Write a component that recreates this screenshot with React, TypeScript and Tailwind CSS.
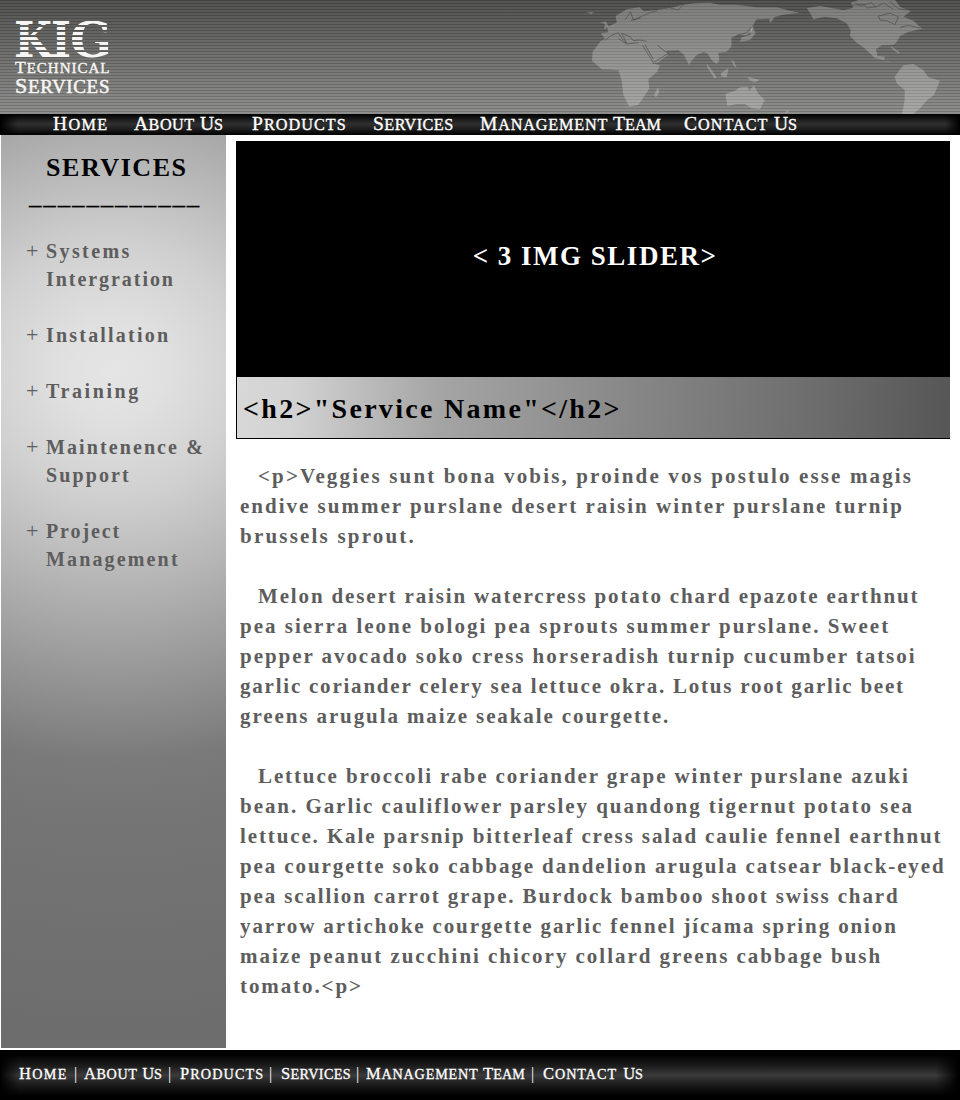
import React from "react";

type Word = [text: string, tracking: string];

const NAV: { words: Word[]; box: string }[] = [
  { words: [["Home", "tracking-[1.4px]"]], box: "ml-[53px] w-[56px]" },
  { words: [["About", "tracking-[.5px]"], ["Us", "tracking-[0px]"]], box: "ml-[25px] w-[89px]" },
  { words: [["Products", "tracking-[1.05px]"]], box: "ml-[29px] w-[95px]" },
  { words: [["Services", "tracking-[.45px]"]], box: "ml-[26px] w-[80px]" },
  { words: [["Management", "tracking-[.85px]"], ["Team", "tracking-[0px]"]], box: "ml-[27px] w-[181px]" },
  { words: [["Contact", "tracking-[1px]"], ["Us", "tracking-[0px]"]], box: "ml-[23px] w-[113px]" },
];

const FOOT: { words: Word[]; box: string }[] = [
  { words: [["Home", "tracking-[1.3px]"]], box: "w-[49px]" },
  { words: [["About", "tracking-[.6px]"], ["Us", "tracking-[0px]"]], box: "ml-[16px] w-[78px]" },
  { words: [["Products", "tracking-[1.1px]"]], box: "ml-[18px] w-[83px]" },
  { words: [["Services", "tracking-[.35px]"]], box: "ml-[18px] w-[69px]" },
  { words: [["Management", "tracking-[.8px]"], ["Team", "tracking-[.1px]"]], box: "ml-[16px] w-[159px]" },
  { words: [["Contact", "tracking-[.95px]"], ["Us", "tracking-[0px]"]], box: "ml-[18px] w-[100px]" },
];

const PARAGRAPHS: Word[][] = [
  [
    ["<p>Veggies sunt bona vobis, proinde vos postulo esse magis", "tracking-[2.14px]"],
    ["endive summer purslane desert raisin winter purslane turnip", "tracking-[2px]"],
    ["brussels sprout.", "tracking-[2.2px]"],
  ],
  [
    ["Melon desert raisin watercress potato chard epazote earthnut", "tracking-[1.85px]"],
    ["pea sierra leone bologi pea sprouts summer purslane. Sweet", "tracking-[2px]"],
    ["pepper avocado soko cress horseradish turnip cucumber tatsoi", "tracking-[1.95px]"],
    ["garlic coriander celery sea lettuce okra. Lotus root garlic beet", "tracking-[1.78px]"],
    ["greens arugula maize seakale courgette.", "tracking-[1.9px]"],
  ],
  [
    ["Lettuce broccoli rabe coriander grape winter purslane azuki", "tracking-[1.88px]"],
    ["bean. Garlic cauliflower parsley quandong tigernut potato sea", "tracking-[1.95px]"],
    ["lettuce. Kale parsnip bitterleaf cress salad caulie fennel earthnut", "tracking-[1.88px]"],
    ["pea courgette soko cabbage dandelion arugula catsear black-eyed", "tracking-[1.9px]"],
    ["pea scallion carrot grape. Burdock bamboo shoot swiss chard", "tracking-[1.86px]"],
    ["yarrow artichoke courgette garlic fennel jícama spring onion", "tracking-[1.88px]"],
    ["maize peanut zucchini chicory collard greens cabbage bush", "tracking-[1.97px]"],
    ["tomato.<p>", "tracking-[1.9px]"],
  ],
];

const SERVICES: Word[][] = [
  [["Systems", "tracking-[2.4px]"], ["Intergration", "tracking-[1.95px]"]],
  [["Installation", "tracking-[2.2px]"]],
  [["Training", "tracking-[2.6px]"]],
  [["Maintenence &", "tracking-[2.1px]"], ["Support", "tracking-[2.1px]"]],
  [["Project", "tracking-[1.9px]"], ["Management", "tracking-[2.15px]"]],
];

const LOGO_BARS = [
  [0, 4],
  [6, 3],
  [11, 3],
  [16, 3],
  [21, 3],
  [26, 3],
  [31, 6],
];

function Caps({ words, size }: { words: Word[]; size: string }) {
  return (
    <>
      {words.map(([text, tracking]) => (
        <span key={text} className={`inline-block uppercase ${size} ${tracking}`}>
          {text}
        </span>
      ))}
    </>
  );
}

function Logo() {
  return (
    <div className="ml-[14px] mt-[21px] w-[100px] text-[#f6f6f4]">
      <svg className="block h-[37px] w-[100px] overflow-visible font-['DejaVu_Serif',serif]" viewBox="0 0 100 37">
        <defs>
          <pattern id="bars" width="110" height="40" patternUnits="userSpaceOnUse">
            {LOGO_BARS.map(([y, h]) => (
              <rect key={y} y={y} width="110" height={h} fill="#f6f6f4" />
            ))}
          </pattern>
        </defs>
        <g fontSize="49" fontWeight="bold" fill="url(#bars)">
          <text x="0" y="36" textLength="38" lengthAdjust="spacingAndGlyphs">K</text>
          <text x="37" y="36" textLength="20" lengthAdjust="spacingAndGlyphs">I</text>
          <text x="56" y="36" textLength="42" lengthAdjust="spacingAndGlyphs">G</text>
        </g>
      </svg>
      <div className="flex h-[18px] items-center pl-px uppercase [-webkit-text-stroke:.4px_#f6f6f4]">
        <span className="inline-block whitespace-nowrap text-[15px] leading-[18px] tracking-[1px] first-letter:text-[17.5px] first-letter:leading-[18px]">Technical</span>
      </div>
      <div className="flex h-[19px] items-center pl-px uppercase [-webkit-text-stroke:.5px_#f6f6f4]">
        <span className="inline-block whitespace-nowrap text-[19px] leading-[19px] tracking-[.65px] first-letter:text-[22px] first-letter:leading-[19px]">Services</span>
      </div>
    </div>
  );
}

function WorldMap() {
  return (
    <svg className="h-[114px] w-[390px]" viewBox="0 0 1170 342" preserveAspectRatio="none">
      <g fill="#ffffff" fillOpacity=".24">
        <path d="M92 100 L114 97 112 80 140 68 137 48 170 28 208 22 222 34 260 30 300 24 340 14 372 10 420 8 450 14 500 14 560 22 620 22 660 32 690 38 640 44 615 50 600 70 598 56 560 58 552 70 545 95 530 105 505 105 485 112 484 140 470 155 445 158 448 180 440 192 425 180 412 160 400 156 380 165 362 185 358 196 342 165 325 150 290 152 294 165 262 188 245 190 270 196 262 215 235 238 238 265 218 296 205 314 178 320 160 285 155 240 145 210 95 208 66 182 68 155 90 125 105 116Z" />
        <path d="M545 75 557 100 540 120 510 125 515 112 540 105Z" />
        <path d="M90 68 108 64 116 80 102 88 105 72Z M48 37 72 36 64 42Z M410 190 440 232 434 236 412 202Z M452 220 475 205 470 232 455 230Z M532 230 570 240 555 247 540 242Z M484 180 492 184 500 204 492 198Z M264 262 268 275 258 292 252 286Z M650 330 658 334 646 342Z" />
        <path d="M466 282 495 272 510 262 534 260 536 274 552 256 564 280 584 300 570 328 545 325 525 312 500 312 472 318Z" />
        <path d="M710 24 750 18 820 30 850 24 842 8 865 0 975 0 990 20 1022 34 1000 50 1030 62 1056 86 1015 96 990 108 978 130 970 134 935 136 918 148 922 168 945 170 942 180 962 188 955 184 915 174 880 142 860 128 840 108 842 90 830 70 800 55 765 50 730 58 722 42Z" />
        <path d="M1000 196 1030 192 1060 210 1075 232 1110 242 1092 285 1072 300 1050 325 1030 342 996 342 1004 300 1004 270 980 250 974 230 985 215Z M960 136 990 158 984 160 968 148Z" />
      </g>
      <g fill="none" stroke="#494949" strokeWidth="2.5" opacity=".75">
        <path d="M104 122 125 106 145 98 153 112 170 130 155 100 180 110 190 122 208 120 230 124 M145 115 170 132 205 128 M218 136 250 188 295 160 280 150 262 136 M225 134 250 178 M165 60 182 35 190 60 240 38 262 32 M182 62 212 54 M500 106 530 98 550 75 M300 24 325 30 340 14" />
        <path d="M845 16 880 12 890 24 920 20 940 10 M855 8 870 18 905 8 918 22 M925 48 960 40 985 50 975 74 950 62 930 60Z M990 82 1015 76 1050 84 M940 8 970 28 M960 6 985 26 1010 30" />
      </g>
    </svg>
  );
}

export default function App() {
  return (
    <div className="flex h-[1100px] w-[960px] flex-col overflow-hidden bg-white font-['Liberation_Serif',serif]">
      <header className="flex h-[114px] shrink-0 justify-between bg-[repeating-linear-gradient(180deg,rgba(0,0,0,.14)_0px,rgba(0,0,0,.14)_1px,rgba(255,255,255,.04)_1px,rgba(255,255,255,.04)_3px),linear-gradient(180deg,#4c4c4a,#6c6c6a_50%,#8a8a88)]">
        <Logo />
        <WorldMap />
      </header>

      <nav className="flex h-[21px] shrink-0 items-center bg-[linear-gradient(90deg,#000,transparent_18px,transparent_945px,#000),linear-gradient(180deg,#000,#1a1a1a_25%,#303030_48%,#1a1a1a_75%,#000)] text-white [-webkit-text-stroke:.35px_#fff]">
        {NAV.map(({ words, box }) => (
          <a key={box} className={`flex justify-between whitespace-nowrap leading-[21px] ${box}`}>
            <Caps words={words} size="text-[16.2px] first-letter:text-[19.5px]" />
          </a>
        ))}
      </nav>

      <main className="flex h-[915px] shrink-0">
        <aside className="ml-px h-[913px] w-[225px] shrink-0 bg-[radial-gradient(ellipse_450px_420px_at_50%_235px,#e5e5e5,#e0e0e0_12%,#d0d0d0_30%,#b6b6b6_50%,#a0a0a0_66%,#7a7a7a_93%,#747474_110%,#6c6c6c_165%)] pl-[25px] pt-[18px]">
          <h2 className="ml-[20px] text-[26px] font-bold leading-[30px] tracking-[1.55px]">SERVICES</h2>
          <div className="ml-[3px] -mt-[2px] mb-[9px] h-[47px] text-[25px] leading-[30px] tracking-[1.85px] [-webkit-text-stroke:.2px_#000]">____________</div>
          {SERVICES.map((lines) => (
            <div key={lines[0][0]} className="mb-[28px] flex text-[20px] leading-[28px] text-[#5d5d5d]">
              <span className="w-[20px] text-[22px]">+</span>
              <div className="font-bold">
                {lines.map(([text, tracking]) => (
                  <div key={text} className={`whitespace-nowrap ${tracking}`}>{text}</div>
                ))}
              </div>
            </div>
          ))}
        </aside>

        <section className="ml-[10px] w-[724px] pt-[6px]">
          <div className="flex h-[236px] w-[714px] items-center justify-center bg-black pb-[5px] pl-[4px] text-[27px] font-bold tracking-[1.5px] text-white">
            &lt; 3 IMG SLIDER&gt;
          </div>
          <h2 className="h-[62px] w-[714px] border-b border-l border-black bg-[linear-gradient(93deg,#d8d8d8,#d2d2d2_8%,#a5a5a5_28%,#868686_56%,#6e6e6e_80%,#565656)] pl-[6px] text-[28px] font-bold leading-[63px] tracking-[2.3px]">
            &lt;h2&gt;"Service Name"&lt;/h2&gt;
          </h2>
          <div className="pt-[22px]">
            {PARAGRAPHS.map((lines) => (
              <p key={lines[0][0]} className="mb-[30px] ml-[4px] text-[21px] font-bold leading-[30px] text-[#5d5d5d]">
                {lines.map(([text, tracking], i) => (
                  <span key={text} className={`block whitespace-nowrap ${tracking} ${i === 0 ? "pl-[18px]" : ""}`}>{text}</span>
                ))}
              </p>
            ))}
          </div>
        </section>
      </main>

      <footer className="flex h-[50px] shrink-0 items-center bg-[linear-gradient(90deg,#000,transparent_20px,transparent_936px,#000_958px),linear-gradient(180deg,#000_8%,#1a1a1a_30%,#3a3a3a_51%,#1a1a1a_70%,#000_92%)] pb-[2px] pl-[19px] text-white [-webkit-text-stroke:.3px_#fff]">
        {FOOT.map(({ words, box }, i) => (
          <React.Fragment key={box + words[0][0]}>
            {i > 0 && <span className="w-0 text-[16px] indent-[6px] [-webkit-text-stroke:0px]">|</span>}
            <a className={`flex justify-between whitespace-nowrap leading-[20px] ${box}`}>
              <Caps words={words} size="text-[14.2px] first-letter:text-[16.5px]" />
            </a>
          </React.Fragment>
        ))}
      </footer>
    </div>
  );
}
